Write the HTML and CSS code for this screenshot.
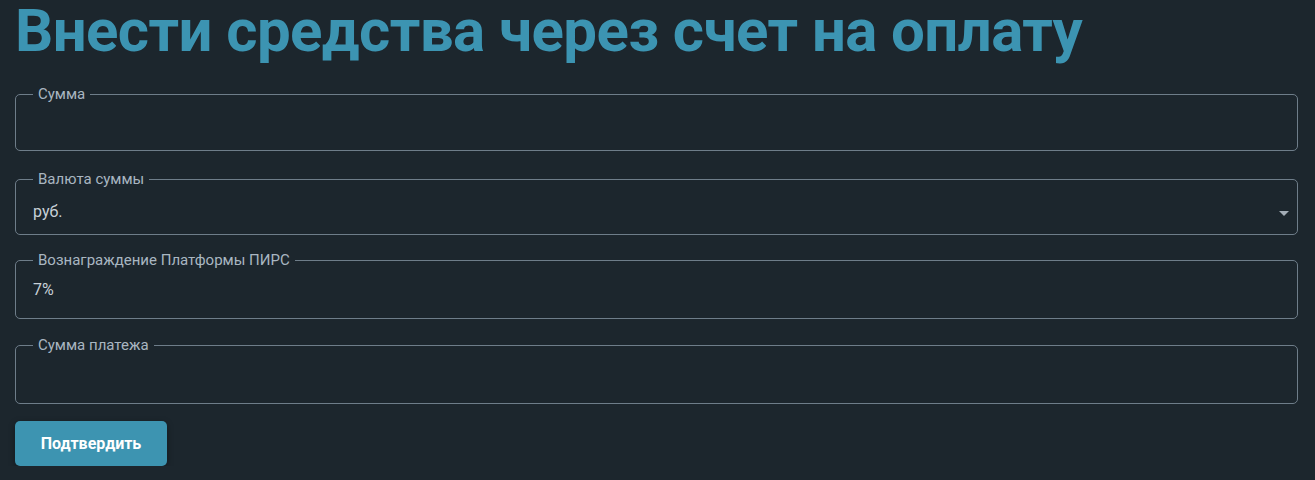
FILE: index.html
```html
<!DOCTYPE html>
<html lang="ru">
<head>
<meta charset="utf-8">
<title>Внести средства через счет на оплату</title>
<link rel="stylesheet" href="styles.css">
</head>
<body>
<main class="page">
  <h1 class="title">Внести средства через счет на оплату</h1>
  <form class="form">
    <fieldset class="field field--first">
      <legend class="field-label">Сумма</legend>
      <div class="field-value"></div>
    </fieldset>
    <fieldset class="field field--select">
      <legend class="field-label">Валюта суммы</legend>
      <div class="field-value field-select">
        <span>руб.</span>
        <svg class="caret" width="10" height="5" viewBox="0 0 10 5"><path d="M0 0h10L5 5z" fill="#a3adb6"/></svg>
      </div>
    </fieldset>
    <fieldset class="field field--input field--after-select">
      <legend class="field-label">Вознаграждение Платформы ПИРС</legend>
      <div class="field-value">7%</div>
    </fieldset>
    <fieldset class="field field--input">
      <legend class="field-label">Сумма платежа</legend>
      <div class="field-value"></div>
    </fieldset>
    <div class="actions">
      <button type="button" class="btn">Подтвердить</button>
    </div>
  </form>
</main>
</body>
</html>
```
FILE: styles.css
```css
html, body {
  margin: 0;
  padding: 0;
  background: #1c262d;
}
body {
  font-family: Roboto, "Liberation Sans", sans-serif;
  color: #c7d0d7;
}
.page {
  padding: 0 17px 0 15px;
}
.title {
  margin: 0;
  font-size: 60px;
  line-height: 62px;
  font-weight: 700;
  color: #3c94b2;
  letter-spacing: -0.6px;
}
.form {
  margin-top: 23px;
  display: flex;
  flex-direction: column;
  gap: 17px;
}
.field {
  margin: 0;
  padding: 0 15px 10px 17px;
  border: 1px solid #6e7d89;
  border-radius: 5px;
  min-width: 0;
}
.field--first {
  padding-bottom: 11px;
}
.field--select {
  margin-top: 2px;
}
.field--after-select {
  margin-top: -1px;
}
.field--input {
  padding-bottom: 16px;
}
.field-label {
  padding: 0 5px;
  margin: 0;
  font-size: 15px;
  line-height: 18px;
  color: #a9b6c1;
}
.field-value {
  margin-top: 12px;
  height: 24px;
  font-size: 16px;
  line-height: 24px;
  color: #c7d0d7;
}
.field--input .field-value {
  margin-top: 9px;
}
.field-select {
  display: flex;
  align-items: center;
  justify-content: space-between;
  margin-right: -7px;
}
.caret {
  display: block;
  margin-top: 2px;
}
.actions {
  display: flex;
}
.btn {
  width: 152px;
  height: 45px;
  border: 0;
  border-radius: 5px;
  background: #3d94b1;
  color: #ffffff;
  font-family: Roboto, "Liberation Sans", sans-serif;
  font-size: 16px;
  font-weight: 700;
  box-shadow: 0 2px 6px rgba(0, 0, 0, 0.35);
  cursor: pointer;
}
```
